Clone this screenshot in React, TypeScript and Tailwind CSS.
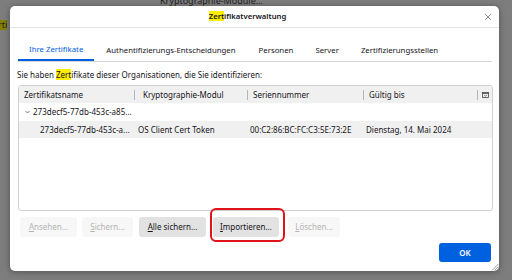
import { X } from "lucide-react";

const font = { fontFamily: '"Noto Sans", "Open Sans", sans-serif' };

function Hl({ children }: { children: React.ReactNode }) {
  return <span className="bg-[#ffee00]">{children}</span>;
}

function Btn({
  label,
  u,
  w,
  disabled,
}: {
  label: string;
  u: string;
  w: string;
  disabled?: boolean;
}) {
  const rest = label.slice(u.length);
  return (
    <div
      className={
        (disabled
          ? "bg-[#f7f7f7] text-[#b4b4b4] "
          : "bg-[#e2e2e2] text-[#15141a] ") +
        w +
        " h-[20px] flex items-center justify-center rounded-[3px]"
      }
    >
      <span className="underline underline-offset-1">{u}</span>
      {rest}
    </div>
  );
}

export default function App() {
  return (
    <div
      className="relative w-[512px] h-[280px] overflow-hidden bg-[#7d7d7d] text-[8px] text-[#15141a]"
      style={font}
    >
      {/* background window, dimmed */}
      <div className="absolute left-[160px] top-[-6px] text-[9px] text-[#1e1e1e]">
        Kryptographie-Module...
      </div>
      <div className="absolute left-[-2px] top-[20px] text-[9px] text-[#1e1e1e] bg-[#858000] leading-[10px]">
        rti
      </div>

      {/* dialog */}
      <div className="absolute left-[10px] top-[6px] w-[489px] h-[265px] bg-white rounded-[5px] shadow-[0_1px_6px_rgba(0,0,0,0.35)] flex flex-col">
        <div className="h-[22px] relative flex items-center justify-center pr-[14px] border-b border-[#e3e3e3] font-semibold text-[7.7px]">
          <span>
            <Hl>Zert</Hl>ifikatverwaltung
          </span>
          <X className="absolute right-[6px] top-[6px] w-[10px] h-[10px] text-[#333]" strokeWidth={1.3} />
        </div>

        <div className="flex-1 flex flex-col px-[8px]">
          {/* tabs */}
          <div className="mt-[12px] flex border-b border-[#d8d8d8] mr-[-1px] text-[7.8px]">
            <div className="h-[21px] px-[11px] flex items-center text-[#0061e0] border-b-2 border-[#0061e0] mb-[-1px]">
              Ihre Zertifikate
            </div>
            <div className="h-[21px] px-[12px] flex items-center">Authentifizierungs-Entscheidungen</div>
            <div className="h-[21px] px-[11px] flex items-center">Personen</div>
            <div className="h-[21px] px-[11px] flex items-center">Server</div>
            <div className="h-[21px] px-[11px] flex items-center">Zertifizierungsstellen</div>
          </div>

          <div className="mt-[7px] h-[12px] flex items-center ml-[-1px]">
            <span>
              Sie haben <Hl>Zert</Hl>ifikate dieser Organisationen, die Sie identifizieren:
            </span>
          </div>

          {/* table */}
          <div className="mt-[4px] w-[475px] h-[126px] border border-[#d0d0d0] rounded-[3px] overflow-hidden">
            <div className="grid grid-cols-[115px_113px_116px_114px_1fr] h-[17px] bg-[#f0f0f0] items-center">
              <div className="pl-[5px]">Zertifikatsname</div>
              <div className="pl-[8px] border-l border-[#b5b5b5] h-[10px] flex items-center">Kryptographie-Modul</div>
              <div className="pl-[5px] border-l border-[#b5b5b5] h-[10px] flex items-center">Seriennummer</div>
              <div className="pl-[5px] border-l border-[#b5b5b5] h-[10px] flex items-center">Gültig bis</div>
              <div className="border-l border-[#b5b5b5] h-[10px] flex items-center justify-center">
                <svg width="7" height="6" viewBox="0 0 7 6" className="ml-[1px]">
                  <rect x="0.5" y="0.5" width="6" height="5" fill="none" stroke="#444" strokeWidth="0.8" />
                  <path d="M0.5 1.5 H6.5" stroke="#444" strokeWidth="0.8" />
                  <path d="M2.2 3 L3.5 4.3 L4.8 3" fill="none" stroke="#444" strokeWidth="0.7" />
                </svg>
              </div>
            </div>
            <div className="h-[18px] flex items-center pl-[6px]">
              <svg width="5" height="4" viewBox="0 0 5 4" className="mr-[3px]">
                <path d="M0.5 1 L2.5 3 L4.5 1" fill="none" stroke="#555" strokeWidth="0.8" />
              </svg>
              273decf5-77db-453c-a85...
            </div>
            <div className="grid grid-cols-[119px_112px_116px_1fr] h-[17px] bg-[#f0f0f0] items-center">
              <div className="pl-[21px] whitespace-nowrap overflow-hidden">273decf5-77db-453c-a...</div>
              <div className="whitespace-nowrap">OS Client Cert Token</div>
              <div className="whitespace-nowrap">00:C2:86:BC:FC:C3:5E:73:2E</div>
              <div className="whitespace-nowrap">Dienstag, 14. Mai 2024</div>
            </div>
          </div>

          {/* action buttons */}
          <div className="mt-[6px] flex ml-[2px]">
            <Btn label="Ansehen..." u="A" w="w-[57px]" disabled />
            <div className="ml-[5px]">
              <Btn label="Sichern..." u="S" w="w-[51px]" disabled />
            </div>
            <div className="ml-[6px]">
              <Btn label="Alle sichern..." u="A" w="w-[67px]" />
            </div>
            <div className="relative ml-[7px]">
              <Btn label="Importieren..." u="I" w="w-[66px]" />
              <div className="absolute left-[-3px] top-[-9px] w-[75px] h-[34px] border-2 border-[#e0131a] rounded-[6px]" />
            </div>
            <div className="ml-[9px]">
              <Btn label="Löschen..." u="L" w="w-[52px]" disabled />
            </div>
          </div>

          <div className="mt-auto mb-[9px] flex justify-end">
            <div className="w-[52px] h-[19px] bg-[#0061e0] text-white rounded-[3px] flex items-center justify-center font-semibold">
              OK
            </div>
          </div>
        </div>

        {/* resize grip */}
        <svg width="8" height="8" viewBox="0 0 8 8" className="absolute right-0 bottom-0">
          <path d="M7.5 1 L1 7.5 M7.5 3.5 L3.5 7.5 M7.5 6 L6 7.5" stroke="#888" strokeWidth="0.8" />
        </svg>
      </div>
    </div>
  );
}
